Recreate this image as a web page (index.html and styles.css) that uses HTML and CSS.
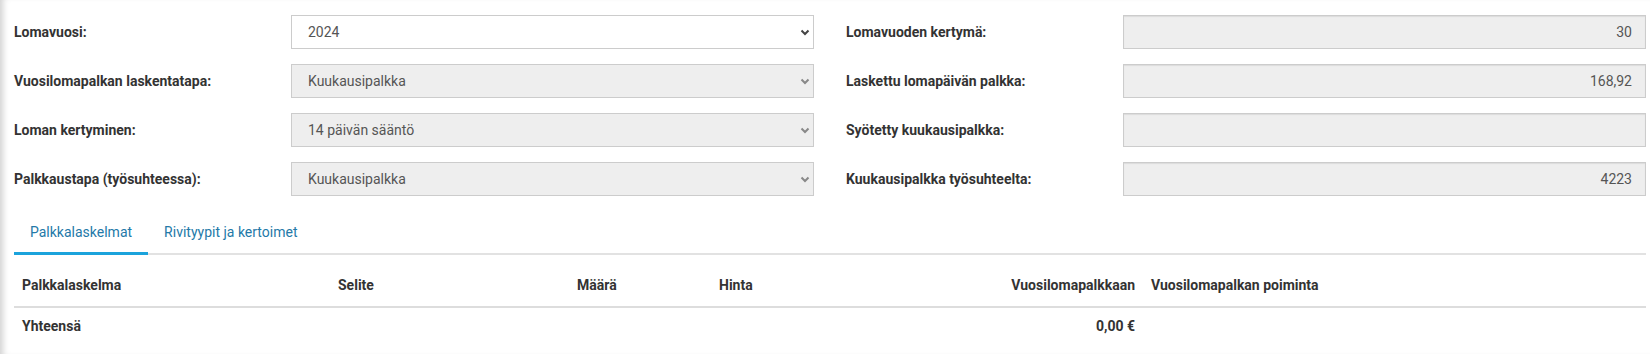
FILE: index.html
```html
<!DOCTYPE html>
<html lang="fi">
<head>
    <meta charset="UTF-8">
    <title>Vuosilomapalkka</title>
    <link rel="stylesheet" href="styles.css">
</head>
<body>
<div class="page">
    <div class="settings">
        <div class="settings-col">
            <div class="field-row">
                <label class="field-label">Lomavuosi:</label>
                <div class="select-wrap">
                    <select class="field-select"><option>2024</option></select>
                    <svg class="chevron" width="10" height="7" viewBox="0 0 10 7"><path d="M1.5 1.5l3.5 3.5 3.5-3.5" fill="none" stroke="currentColor" stroke-width="2"/></svg>
                </div>
            </div>
            <div class="field-row">
                <label class="field-label">Vuosilomapalkan laskentatapa:</label>
                <div class="select-wrap">
                    <select class="field-select" disabled><option>Kuukausipalkka</option></select>
                    <svg class="chevron" width="10" height="7" viewBox="0 0 10 7"><path d="M1.5 1.5l3.5 3.5 3.5-3.5" fill="none" stroke="currentColor" stroke-width="2"/></svg>
                </div>
            </div>
            <div class="field-row">
                <label class="field-label">Loman kertyminen:</label>
                <div class="select-wrap">
                    <select class="field-select" disabled><option>14 päivän sääntö</option></select>
                    <svg class="chevron" width="10" height="7" viewBox="0 0 10 7"><path d="M1.5 1.5l3.5 3.5 3.5-3.5" fill="none" stroke="currentColor" stroke-width="2"/></svg>
                </div>
            </div>
            <div class="field-row">
                <label class="field-label">Palkkaustapa (työsuhteessa):</label>
                <div class="select-wrap">
                    <select class="field-select" disabled><option>Kuukausipalkka</option></select>
                    <svg class="chevron" width="10" height="7" viewBox="0 0 10 7"><path d="M1.5 1.5l3.5 3.5 3.5-3.5" fill="none" stroke="currentColor" stroke-width="2"/></svg>
                </div>
            </div>
        </div>

        <div class="settings-col">
            <div class="field-row">
                <label class="field-label">Lomavuoden kertymä:</label>
                <input class="field-input" type="text" value="30" readonly>
            </div>
            <div class="field-row">
                <label class="field-label">Laskettu lomapäivän palkka:</label>
                <input class="field-input" type="text" value="168,92" readonly>
            </div>
            <div class="field-row">
                <label class="field-label">Syötetty kuukausipalkka:</label>
                <input class="field-input" type="text" value="" readonly>
            </div>
            <div class="field-row">
                <label class="field-label">Kuukausipalkka työsuhteelta:</label>
                <input class="field-input" type="text" value="4223" readonly>
            </div>
        </div>
    </div>

    <div class="tabs">
        <a class="tab active">Palkkalaskelmat</a>
        <a class="tab">Rivityypit ja kertoimet</a>
    </div>

    <table class="pay-table">
        <colgroup>
            <col class="col-slip">
            <col class="col-desc">
            <col class="col-qty">
            <col class="col-price">
            <col class="col-sum">
            <col>
        </colgroup>
        <thead>
            <tr>
                <th>Palkkalaskelma</th>
                <th>Selite</th>
                <th>Määrä</th>
                <th>Hinta</th>
                <th class="num">Vuosilomapalkkaan</th>
                <th>Vuosilomapalkan poiminta</th>
            </tr>
        </thead>
        <tbody>
            <tr class="total-row">
                <td>Yhteensä</td>
                <td></td>
                <td></td>
                <td></td>
                <td class="num">0,00 €</td>
                <td></td>
            </tr>
        </tbody>
    </table>
</div>
</body>
</html>
```

FILE: styles.css
```css
* {
    box-sizing: border-box;
    margin: 0;
    padding: 0;
}

body {
    font-family: Roboto, "Liberation Sans", sans-serif;
    font-size: 14px;
    color: #333;
    background: #fff;
}

.page {
    min-height: 100vh;
    padding: 15px 4px 0 14px;
    box-shadow: inset 7px 0 6px -4px rgba(0,0,0,0.18);
}

.settings {
    display: grid;
    grid-template-columns: 1fr 1fr;
    column-gap: 32px;
    margin-bottom: 16px;
}

.settings-col {
    display: grid;
    row-gap: 15px;
}

.field-row {
    display: grid;
    grid-template-columns: 277px 1fr;
    align-items: center;
}

.field-label {
    font-weight: 700;
    color: #333;
    line-height: 17px;
}

.select-wrap {
    position: relative;
}

.field-select,
.field-input {
    display: block;
    width: 100%;
    height: 34px;
    font-family: inherit;
    font-size: 14px;
    color: #555;
    border: 1px solid #ccc;
    border-radius: 0;
    outline: none;
}

.field-select {
    appearance: none;
    -webkit-appearance: none;
    background: #fff;
    padding: 0 30px 0 16px;
}

.field-select:disabled {
    background: #eee;
    color: #555;
    opacity: 1;
}

.chevron {
    position: absolute;
    right: 4px;
    top: 14px;
    color: #444;
    pointer-events: none;
}

.field-select:disabled + .chevron {
    color: #888;
}

.field-input {
    background: #eee;
    text-align: right;
    padding: 0 13px;
    box-shadow: inset 0 1px 1px rgba(0,0,0,0.08);
}

.tabs {
    display: flex;
    border-bottom: 2px solid #e2e2e2;
}

.tab {
    padding: 12px 16px 11px;
    line-height: 17px;
    color: #2479a8;
    border-bottom: 3px solid transparent;
    margin-bottom: -2px;
    cursor: pointer;
}

.tab.active {
    border-bottom-color: #1ba3dc;
}

.pay-table {
    width: 100%;
    table-layout: fixed;
    border-collapse: collapse;
    margin-top: 10px;
}

.col-slip { width: 316px; }
.col-desc { width: 239px; }
.col-qty { width: 142px; }
.col-price { width: 279px; }
.col-sum { width: 153px; }

.pay-table th {
    text-align: left;
    font-weight: 700;
    line-height: 17px;
    padding: 12px 8px;
    border-bottom: 2px solid #ddd;
}

.pay-table td {
    font-weight: 700;
    line-height: 17px;
    padding: 10px 8px;
}

.pay-table .num {
    text-align: right;
}
```
